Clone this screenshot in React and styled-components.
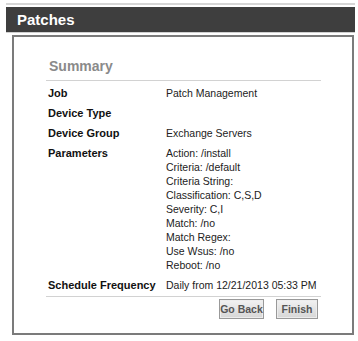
import React from "react";
import styled, { createGlobalStyle } from "styled-components";

const GlobalStyle = createGlobalStyle`
  body {
    margin: 0;
    background: #ffffff;
    font-family: "Liberation Sans", Arial, sans-serif;
  }
`;

const summary = [
  { label: "Job", values: ["Patch Management"] },
  { label: "Device Type", values: [] },
  { label: "Device Group", values: ["Exchange Servers"] },
  {
    label: "Parameters",
    values: [
      "Action: /install",
      "Criteria: /default",
      "Criteria String:",
      "Classification: C,S,D",
      "Severity: C,I",
      "Match: /no",
      "Match Regex:",
      "Use Wsus: /no",
      "Reboot: /no",
    ],
  },
  { label: "Schedule Frequency", values: ["Daily from 12/21/2013 05:33 PM"] },
];

const App = () => {
  return (
    <Page>
      <GlobalStyle />
      <TopRule />
      <TitleBar>Patches</TitleBar>
      <Panel>
        <SummaryTitle>Summary</SummaryTitle>
        <Rows>
          {summary.map((row) => (
            <Row key={row.label}>
              <Label>{row.label}</Label>
              <Values>
                {row.values.map((v) => (
                  <div key={v}>{v}</div>
                ))}
              </Values>
            </Row>
          ))}
        </Rows>
        <Actions>
          <Button $w={45}>Go Back</Button>
          <Button $w={42}>Finish</Button>
        </Actions>
      </Panel>
    </Page>
  );
};

export default App;

const Page = styled.div`
  width: 358px;
  padding-top: 3px;
  padding-left: 6px;
  box-sizing: border-box;
`;

const TopRule = styled.div`
  width: 349px;
  height: 2px;
  background: #d6d6d6;
  margin-bottom: 2px;
`;

const TitleBar = styled.div`
  width: 338px;
  height: 25px;
  padding-left: 11px;
  margin-bottom: 2px;
  background: #3e3e3e;
  border-bottom: 1px solid #d0d0d0;
  color: #ffffff;
  font-weight: bold;
  font-size: 15px;
  line-height: 25px;
`;

const Panel = styled.div`
  margin-left: 6px;
  width: 342px;
  height: 300px;
  box-sizing: border-box;
  border: 2px solid #7b7b7b;
  padding: 0 31px 0 32px;
`;

const SummaryTitle = styled.div`
  padding: 21px 0 5px 3px;
  font-size: 14px;
  line-height: 17px;
  font-weight: bold;
  color: #8a8a8a;
  border-bottom: 1px solid #d2d2d2;
`;

const Rows = styled.div`
  display: flex;
  flex-direction: column;
  gap: 6px;
  padding: 5px 0 4px 2px;
  border-bottom: 1px solid #d2d2d2;
`;

const Row = styled.div`
  display: grid;
  grid-template-columns: 118px 1fr;
  font-size: 11px;
  line-height: 14px;
`;

const Label = styled.div`
  font-weight: bold;
  color: #111111;
  white-space: nowrap;
`;

const Values = styled.div`
  color: #222222;
  font-size: 10.5px;
  white-space: nowrap;
`;

const Actions = styled.div`
  display: flex;
  justify-content: flex-end;
  gap: 12px;
  padding: 2px 3px 0 0;
`;

const Button = styled.button`
  width: ${(p) => p.$w}px;
  height: 20px;
  padding: 0;
  font-family: "Liberation Sans", Arial, sans-serif;
  font-size: 10.5px;
  font-weight: bold;
  color: #555555;
  background: linear-gradient(#f2f2f2, #d6d6d6);
  border: 1px solid #999999;
  box-shadow: inset 0 0 0 1px #ededed;
  border-radius: 0;
`;
